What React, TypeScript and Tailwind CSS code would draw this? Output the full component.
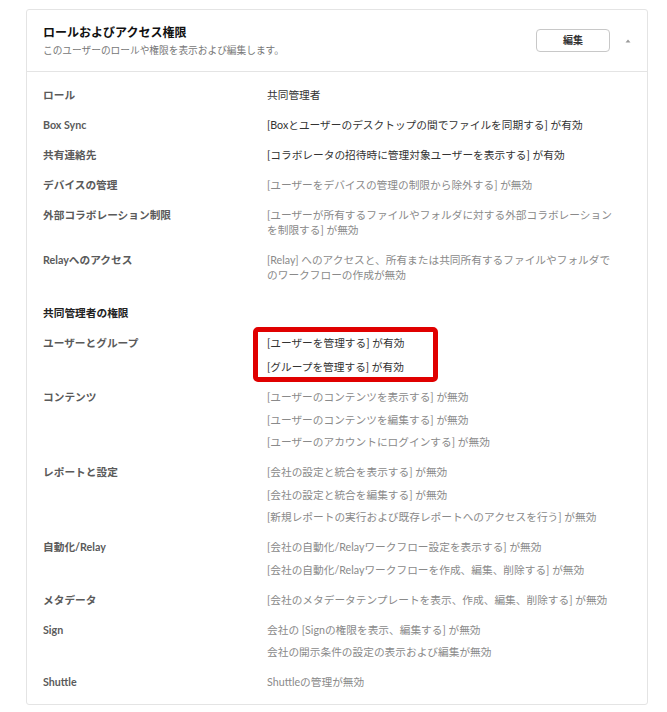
const font = { fontFamily: '"Lato", "Noto Sans CJK JP", sans-serif' };

type Item = { text: string; on?: boolean };
type Row = { label: string; items: Item[]; boxed?: boolean };

const topRows: Row[] = [
    { label: "ロール", items: [{ text: "共同管理者", on: true }] },
    { label: "Box Sync", items: [{ text: "[Boxとユーザーのデスクトップの間でファイルを同期する] が有効", on: true }] },
    { label: "共有連絡先", items: [{ text: "[コラボレータの招待時に管理対象ユーザーを表示する] が有効", on: true }] },
    { label: "デバイスの管理", items: [{ text: "[ユーザーをデバイスの管理の制限から除外する] が無効" }] },
    {
        label: "外部コラボレーション制限",
        items: [{ text: "[ユーザーが所有するファイルやフォルダに対する外部コラボレーションを制限する] が無効" }],
    },
    {
        label: "Relayへのアクセス",
        items: [{ text: "[Relay] へのアクセスと、所有または共同所有するファイルやフォルダでのワークフローの作成が無効" }],
    },
];

const adminRows: Row[] = [
    {
        label: "ユーザーとグループ",
        boxed: true,
        items: [
            { text: "[ユーザーを管理する] が有効", on: true },
            { text: "[グループを管理する] が有効", on: true },
        ],
    },
    {
        label: "コンテンツ",
        items: [
            { text: "[ユーザーのコンテンツを表示する] が無効" },
            { text: "[ユーザーのコンテンツを編集する] が無効" },
            { text: "[ユーザーのアカウントにログインする] が無効" },
        ],
    },
    {
        label: "レポートと設定",
        items: [
            { text: "[会社の設定と統合を表示する] が無効" },
            { text: "[会社の設定と統合を編集する] が無効" },
            { text: "[新規レポートの実行および既存レポートへのアクセスを行う] が無効" },
        ],
    },
    {
        label: "自動化/Relay",
        items: [
            { text: "[会社の自動化/Relayワークフロー設定を表示する] が無効" },
            { text: "[会社の自動化/Relayワークフローを作成、編集、削除する] が無効" },
        ],
    },
    { label: "メタデータ", items: [{ text: "[会社のメタデータテンプレートを表示、作成、編集、削除する] が無効" }] },
    {
        label: "Sign",
        items: [{ text: "会社の [Signの権限を表示、編集する] が無効" }, { text: "会社の開示条件の設定の表示および編集が無効" }],
    },
    { label: "Shuttle", items: [{ text: "Shuttleの管理が無効" }] },
];

function PermRow({ row }: { row: Row }) {
    return (
        <div className="grid grid-cols-[224px_350px]">
            <div className="text-[10.7px] leading-[15px] font-bold text-[#5a5a5a]">{row.label}</div>
            <div className={`relative flex flex-col ${row.boxed ? "gap-[9px]" : "gap-[7.5px]"}`}>
                {row.boxed && (
                    <div className="absolute -left-[14px] -top-[8px] w-[185px] -bottom-[8px] border-[5px] border-[#e00000] rounded-[5px]" />
                )}
                {row.items.map((item, i) => (
                    <p
                        key={i}
                        className={`text-[10.7px] leading-[15px] ${item.on ? "text-[#333333]" : "text-[#8a8a8a]"}`}
                    >
                        {item.text}
                    </p>
                ))}
            </div>
        </div>
    );
}

export default function App() {
    return (
        <div className="min-h-[712px] bg-white pt-[9px] pl-[26px]" style={font}>
            <div className="w-[622px] border border-[#e4e4e4] rounded-[3px] bg-white">
                <div className="flex items-start justify-between pl-4 pr-[15px] pt-[15px] pb-[14px] border-b border-[#e4e4e4]">
                    <div>
                        <h2 className="text-[12px] leading-[16px] font-bold text-[#111111]">ロールおよびアクセス権限</h2>
                        <p className="mt-[2px] text-[9.7px] leading-[14px] text-[#777777]">
                            このユーザーのロールや権限を表示および編集します。
                        </p>
                    </div>
                    <div className="flex items-center gap-[14px] pt-[4px]">
                        <button className="w-[74px] h-[23px] rounded-[4px] border border-[#c8c8c8] bg-white text-[10px] font-bold text-[#333333]">
                            編集
                        </button>
                        <svg width="8" height="6" viewBox="0 0 8 6">
                            <path d="M4 1.5 L6.5 4.5 L1.5 4.5 Z" fill="#9a9a9a" />
                        </svg>
                    </div>
                </div>

                <div className="px-4 pt-[15px] pb-[15px] flex flex-col gap-[15px]">
                    {topRows.map((r) => (
                        <PermRow key={r.label} row={r} />
                    ))}
                    <h3 className="mt-2 text-[10.7px] leading-[15px] font-bold text-[#222222]">共同管理者の権限</h3>
                    {adminRows.map((r) => (
                        <PermRow key={r.label} row={r} />
                    ))}
                </div>
            </div>
        </div>
    );
}
